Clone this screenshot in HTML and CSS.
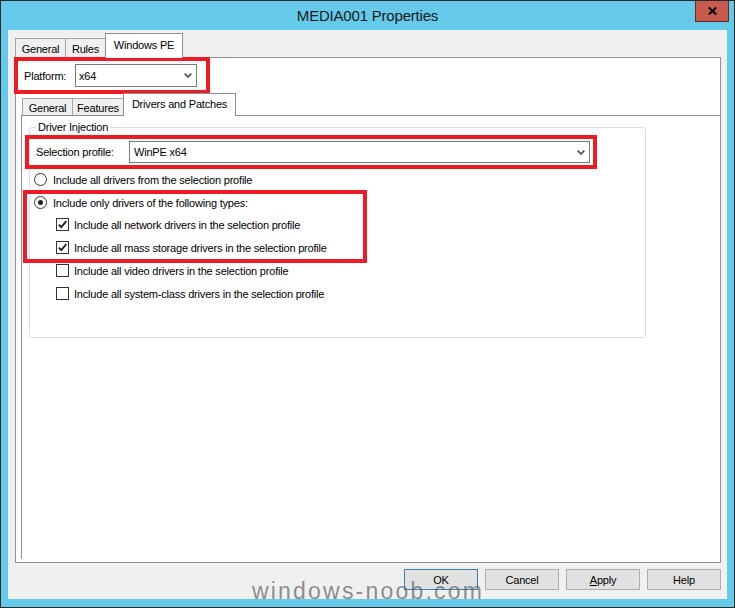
FILE: index.html
```html
<!DOCTYPE html>
<html>
<head>
<meta charset="utf-8">
<link rel="stylesheet" href="styles.css">
</head>
<body>
<div class="window">
  <div class="titlebar">
    <span class="title">MEDIA001 Properties</span>
    <div class="close">
      <svg width="9" height="8" viewBox="0 0 9 8"><path d="M0.8 0.5 L8.2 7.5 M8.2 0.5 L0.8 7.5" stroke="#000" stroke-width="2" fill="none"/></svg>
    </div>
  </div>
  <div class="client">
    <div class="tabs tabs-outer">
      <div class="tab w-general">General</div>
      <div class="tab w-rules">Rules</div>
      <div class="tab sel w-winpe">Windows PE</div>
    </div>
    <div class="panel">
      <div class="platform-row">
        <span class="plat-lbl">Platform:</span>
        <div class="combo combo-platform">
          <span>x64</span>
          <svg class="chev" width="8" height="5" viewBox="0 0 8 5"><polyline points="0.7,0.7 4,4 7.3,0.7" fill="none" stroke="#505050" stroke-width="1.7"/></svg>
        </div>
      </div>
      <div class="tabs tabs-inner">
        <div class="tab w-general2">General</div>
        <div class="tab w-features">Features</div>
        <div class="tab sel w-drivers">Drivers and Patches</div>
      </div>
      <div class="inner-panel">
        <div class="group">
          <div class="legend">Driver Injection</div>
          <div class="profile-row">
            <span class="prof-lbl">Selection profile:</span>
            <div class="combo combo-profile">
              <span>WinPE x64</span>
              <svg class="chev" width="8" height="5" viewBox="0 0 8 5"><polyline points="0.7,0.7 4,4 7.3,0.7" fill="none" stroke="#505050" stroke-width="1.7"/></svg>
            </div>
          </div>
          <div class="opts">
            <div class="opt"><span class="radio"></span><span>Include all drivers from the selection profile</span></div>
            <div class="opt"><span class="radio on"></span><span>Include only drivers of the following types:</span></div>
            <div class="opt opt-tight"><span class="check"><svg width="11" height="11" viewBox="0 0 11 11"><path d="M1.8 5.6 L4.3 8.2 L9.3 2.2" fill="none" stroke="#1e1e1e" stroke-width="1.8"/></svg></span><span>Include all network drivers in the selection profile</span></div>
            <div class="opt"><span class="check"><svg width="11" height="11" viewBox="0 0 11 11"><path d="M1.8 5.6 L4.3 8.2 L9.3 2.2" fill="none" stroke="#1e1e1e" stroke-width="1.8"/></svg></span><span>Include all mass storage drivers in the selection profile</span></div>
            <div class="opt"><span class="check"></span><span>Include all video drivers in the selection profile</span></div>
            <div class="opt"><span class="check"></span><span>Include all system-class drivers in the selection profile</span></div>
          </div>
        </div>
      </div>
    </div>
    <div class="buttons">
      <div class="btn default">OK</div>
      <div class="btn">Cancel</div>
      <div class="btn"><span><u>A</u>pply</span></div>
      <div class="btn">Help</div>
    </div>
  </div>
  <div class="redbox rb-platform"></div>
  <div class="redbox rb-profile"></div>
  <div class="redbox rb-types"></div>
  <div class="watermark">windows-noob.com</div>
</div>
</body>
</html>
```

FILE: styles.css
```css
body {
  margin: 0;
  font-family: "Liberation Sans", Arial, sans-serif;
  font-size: 11px;
  letter-spacing: -0.2px;
  color: #000;
}

.window {
  position: relative;
  width: 735px;
  height: 608px;
  box-sizing: border-box;
  border: 1px solid #2b2b2b;
  background: #65c9e9;
  overflow: hidden;
}

.titlebar {
  height: 29px;
  display: flex;
  align-items: center;
  justify-content: center;
}

.title {
  font-size: 15px;
  letter-spacing: -0.2px;
  color: #1a1a1a;
}

.close {
  position: absolute;
  left: 694px;
  top: -1px;
  width: 34px;
  height: 22px;
  box-sizing: border-box;
  background: #c75a4d;
  border: 1px solid #5a2f2b;
  display: flex;
  align-items: center;
  justify-content: center;
}

.client {
  margin: 0 7px;
  height: 569px;
  box-sizing: border-box;
  background: #f0f0f0;
  padding: 3px 6px 0 7px;
}

.tabs {
  display: flex;
  align-items: flex-end;
}

.tabs-outer {
  height: 24px;
}

.tabs-inner {
  height: 22px;
  margin: 6px 0 0 6px;
}

.tab {
  box-sizing: border-box;
  height: 19px;
  border: 1px solid #a3a3a8;
  border-bottom: none;
  background: #f0f0f0;
  display: flex;
  align-items: center;
  justify-content: center;
  padding-top: 2px;
}

.tabs-inner .tab {
  height: 17px;
  padding-top: 1px;
}

.tab + .tab {
  margin-left: -1px;
}

.tab.sel {
  position: relative;
  z-index: 1;
  height: 25px;
  margin-bottom: -1px;
  background: #fff;
  border-color: #8e8f94;
  padding-top: 0;
  padding-bottom: 2px;
}

.tabs-inner .tab.sel {
  height: 23px;
  padding-top: 0;
  padding-bottom: 2px;
}

.w-general { width: 51px; }
.w-rules { width: 41px; }
.w-winpe { width: 78px; }
.w-general2 { width: 51px; }
.w-features { width: 52px; }
.w-drivers { width: 113px; }

.panel {
  box-sizing: border-box;
  height: 506px;
  border: 1px solid #8e8f94;
  background: #fff;
  padding-top: 6px;
}

.platform-row {
  display: flex;
  align-items: center;
  height: 23px;
  padding-left: 8px;
}

.plat-lbl {
  width: 51px;
}

.combo {
  box-sizing: border-box;
  border: 1px solid #7a7a7a;
  background: #fff;
  display: flex;
  align-items: center;
  justify-content: space-between;
  padding: 0 4px 0 3px;
}

.combo-platform {
  width: 122px;
  height: 23px;
}

.combo-profile {
  width: 461px;
  height: 22px;
  padding-left: 4px;
}

.chev {
  display: block;
}

.inner-panel {
  box-sizing: border-box;
  height: 444px;
  margin-left: 5px;
  border-left: 1px solid #8e8f94;
  border-top: 1px solid #8e8f94;
  padding: 11px 0 0 7px;
}

.group {
  box-sizing: border-box;
  width: 617px;
  height: 211px;
  border: 1px solid #d5dfe5;
  border-radius: 3px;
  padding-left: 3px;
}

.legend {
  width: max-content;
  height: 13px;
  line-height: 13px;
  margin: -7px 0 0 3px;
  padding: 0 2px;
  background: #fff;
}

.profile-row {
  display: flex;
  align-items: center;
  height: 22px;
  margin-top: 7px;
}

.prof-lbl {
  width: 93px;
  margin-left: 3px;
}

.opts {
  margin-top: 5px;
}

.opt {
  display: flex;
  align-items: center;
  height: 23px;
}

.opt-tight {
  margin-top: -1px;
}

.radio {
  box-sizing: border-box;
  width: 13px;
  height: 13px;
  margin: 0 6px 0 1px;
  border: 1px solid #333;
  border-radius: 50%;
  background: #fff;
  display: flex;
  align-items: center;
  justify-content: center;
}

.radio.on::after {
  content: "";
  width: 5px;
  height: 5px;
  border-radius: 50%;
  background: #222;
}

.check {
  box-sizing: border-box;
  width: 13px;
  height: 13px;
  margin: 0 5px 0 23px;
  border: 1px solid #333;
  background: #fff;
  display: flex;
  align-items: center;
  justify-content: center;
}

.check svg {
  display: block;
}

.buttons {
  display: flex;
  justify-content: flex-end;
  gap: 7px;
  margin-top: 6px;
}

.btn {
  box-sizing: border-box;
  width: 74px;
  height: 21px;
  border: 1px solid #adadad;
  background: #e1e1e1;
  display: flex;
  align-items: center;
  justify-content: center;
}

.btn.default {
  border-color: #3c7fb1;
}

.redbox {
  position: absolute;
  box-sizing: border-box;
  border: 4px solid #ed1c24;
}

.rb-platform {
  left: 13px;
  top: 56px;
  width: 196px;
  height: 37px;
}

.rb-profile {
  left: 24px;
  top: 134px;
  width: 572px;
  height: 34px;
}

.rb-types {
  left: 22px;
  top: 189px;
  width: 344px;
  height: 73px;
}

.watermark {
  position: absolute;
  left: 251px;
  top: 579px;
  font-size: 23px;
  line-height: 23px;
  letter-spacing: 2.2px;
  color: rgba(95, 95, 95, 0.7);
  white-space: nowrap;
}
```
